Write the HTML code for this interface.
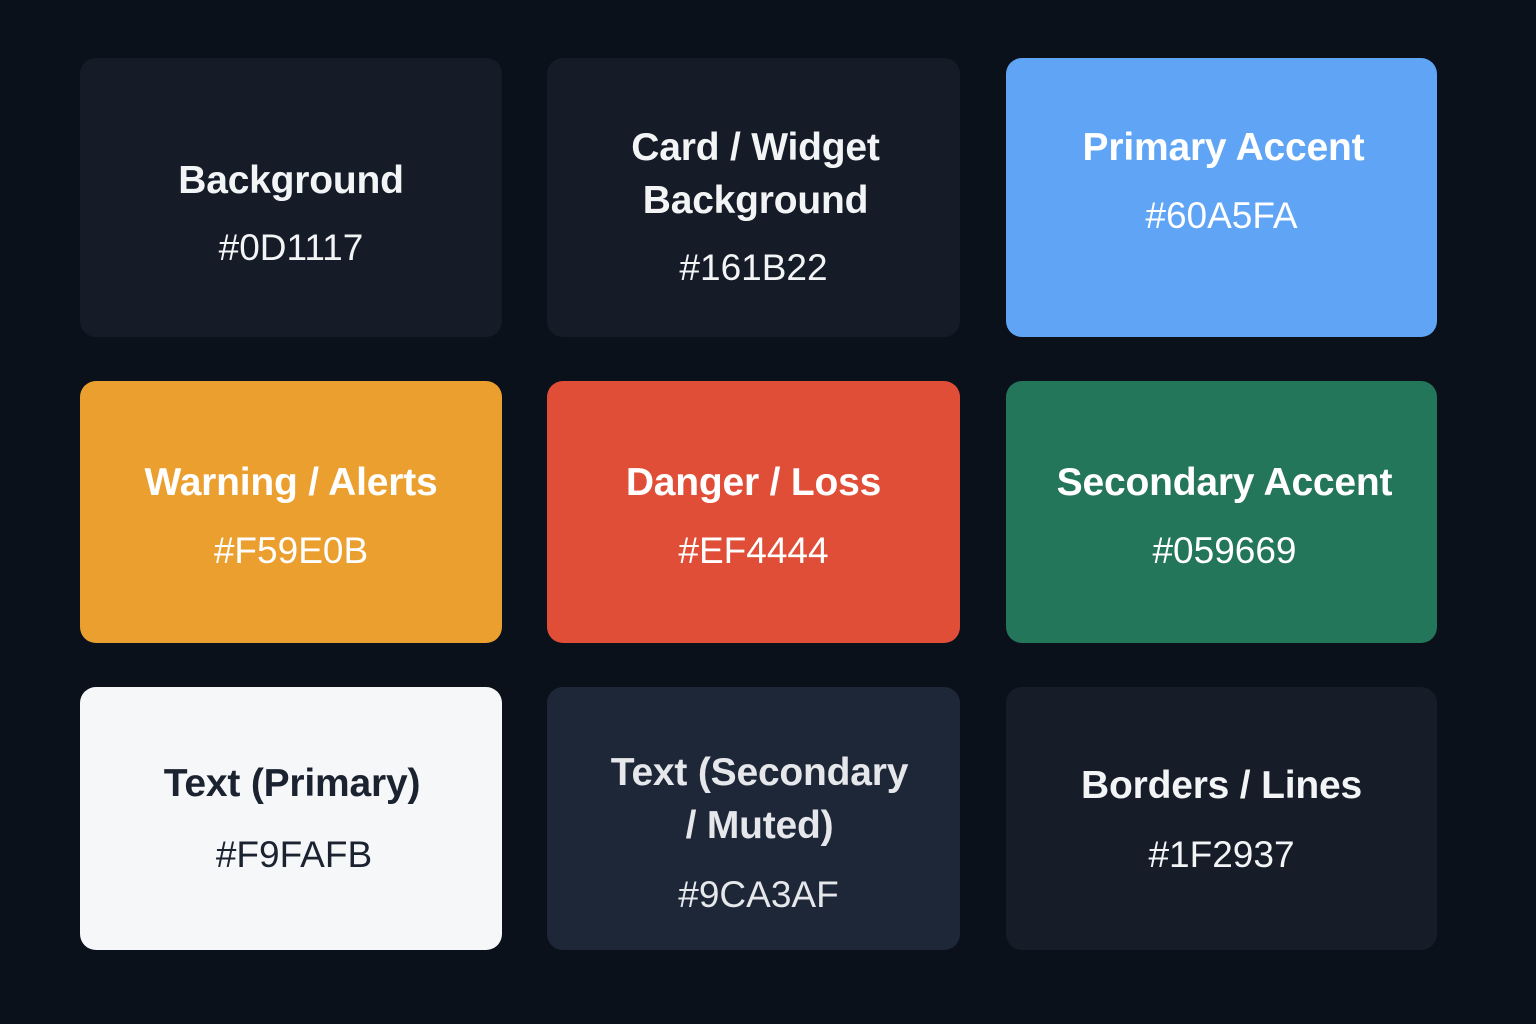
<!DOCTYPE html>
<html><head><meta charset="utf-8"><style>
body{margin:0;width:1536px;height:1024px;background:#0b111b;font-family:"Liberation Sans",sans-serif;position:relative;overflow:hidden}
.c{position:absolute;border-radius:16px}
.t{position:absolute;left:0;right:0;text-align:center;font-weight:bold;font-size:39px;line-height:52px;transform:translateY(-26px);letter-spacing:-0.2px}
.h{position:absolute;left:0;right:0;text-align:center;font-size:37px;line-height:50px;transform:translateY(-25px)}
</style></head><body>
<div class="c" style="left:80px;top:58px;width:422px;height:279px;background:#151c28;color:#f3f4f6">
<div class="t" style="top:123px">Background</div><div class="h" style="top:190px">#0D1117</div></div>
<div class="c" style="left:547px;top:58px;width:413px;height:279px;background:#161c27;color:#f3f4f6">
<div class="t" style="top:90px;left:4px">Card / Widget</div><div class="t" style="top:143px;left:4px">Background</div><div class="h" style="top:210px">#161B22</div></div>
<div class="c" style="left:1006px;top:58px;width:431px;height:279px;background:#60a5f5;color:#fff">
<div class="t" style="top:90px;left:4px">Primary Accent</div><div class="h" style="top:158px">#60A5FA</div></div>

<div class="c" style="left:80px;top:381px;width:422px;height:262px;background:#eb9f2f;color:#fff">
<div class="t" style="top:102px">Warning / Alerts</div><div class="h" style="top:170px">#F59E0B</div></div>
<div class="c" style="left:547px;top:381px;width:413px;height:262px;background:#e04e37;color:#fff">
<div class="t" style="top:102px">Danger / Loss</div><div class="h" style="top:170px">#EF4444</div></div>
<div class="c" style="left:1006px;top:381px;width:431px;height:262px;background:#24765a;color:#fff">
<div class="t" style="top:102px;left:6px">Secondary Accent</div><div class="h" style="top:170px;left:6px">#059669</div></div>

<div class="c" style="left:80px;top:687px;width:422px;height:263px;background:#f6f7f9;color:#1b2230">
<div class="t" style="top:97px;left:2px">Text (Primary)</div><div class="h" style="top:168px;left:6px">#F9FAFB</div></div>
<div class="c" style="left:547px;top:687px;width:413px;height:263px;background:#1e2738;color:#e5e7eb">
<div class="t" style="top:86px;left:12px">Text (Secondary</div><div class="t" style="top:139px;left:12px">/ Muted)</div><div class="h" style="top:208px;left:10px">#9CA3AF</div></div>
<div class="c" style="left:1006px;top:687px;width:431px;height:263px;background:#161c28;color:#f3f4f6">
<div class="t" style="top:99px">Borders / Lines</div><div class="h" style="top:168px">#1F2937</div></div>
</body></html>
